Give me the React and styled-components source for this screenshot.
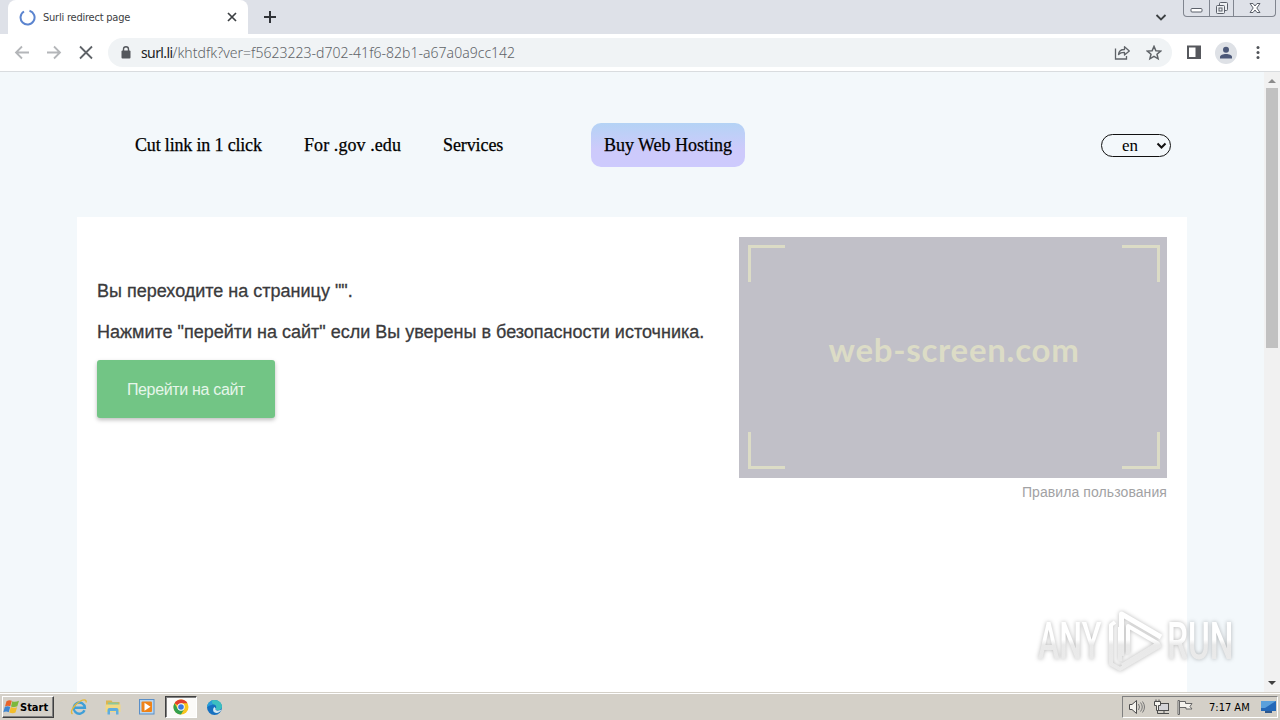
import React from "react";
import styled, { createGlobalStyle } from "styled-components";

const GlobalStyle = createGlobalStyle`
  * {
    box-sizing: border-box;
  }
  body {
    margin: 0;
    overflow: hidden;
  }
  svg {
    display: block;
    flex: none;
  }
`;

const Screen = styled.div`
  display: flex;
  flex-direction: column;
  position: relative;
  width: 1280px;
  height: 720px;
  background: #fff;
  font-family: "Liberation Sans", Arial, sans-serif;
`;

const Label = styled.span`
  white-space: nowrap;
  letter-spacing: ${(p) => p.$spacing || 0}px;
`;

/* ---------- browser window ---------- */

const TabStrip = styled.div`
  display: flex;
  height: 34px;
  padding-left: 8px;
  background: #dee1e8;
`;

const Tab = styled.div`
  display: flex;
  align-items: center;
  width: 240px;
  height: 34px;
  padding: 0 10px 0 11px;
  background: #fff;
  border-radius: 8px 8px 0 0;
  font-family: "DejaVu Sans Condensed", "DejaVu Sans", sans-serif;
  font-stretch: condensed;
  font-size: 11px;
  color: #3c4043;
`;

const TabTitle = styled(Label)`
  flex: 1;
  margin-left: 7px;
`;

const NewTab = styled.div`
  display: flex;
  align-items: center;
  flex: 1;
  padding-left: 15px;
`;

const TabSearch = styled.div`
  display: flex;
  align-items: center;
  width: 28px;
`;

const WindowButtons = styled.div`
  display: flex;
  width: 93px;
  height: 17px;
  margin-right: 4px;
  border: 1px solid #80858f;
  border-top: 0;
  border-radius: 0 0 4px 4px;
`;

const WindowButton = styled.div`
  display: flex;
  align-items: center;
  justify-content: center;
  width: ${(p) => p.$width}px;
  & + & {
    border-left: 1px solid #80858f;
  }
`;

const Toolbar = styled.div`
  display: flex;
  align-items: center;
  height: 38px;
  padding: 0 14px;
  background: #fff;
  border-bottom: 1px solid #d9dcdf;
`;

const NavButtons = styled.div`
  display: flex;
  gap: 16px;
  width: 94px;
`;

const AddressBar = styled.div`
  display: flex;
  align-items: center;
  width: 1064px;
  height: 29px;
  padding: 0 10px 0 12px;
  background: #f0f3f5;
  border-radius: 15px;
  font-family: "Noto Sans", sans-serif;
  font-size: 14px;
  font-weight: 300;
  color: #5f6368;
  b {
    font-weight: 400;
    letter-spacing: -0.6px;
    color: #202124;
  }
`;

const Url = styled(Label)`
  flex: 1;
  margin-left: 9px;
`;

const BarIcons = styled.div`
  display: flex;
  gap: 16px;
`;

const ToolIcons = styled.div`
  display: flex;
  align-items: center;
  margin-left: 14px;
`;

const Avatar = styled.div`
  display: flex;
  align-items: center;
  justify-content: center;
  width: 22px;
  height: 22px;
  margin: 0 13px 0 13px;
  border-radius: 50%;
  background: #dee1e6;
`;

/* ---------- page ---------- */

const Viewport = styled.div`
  display: flex;
  height: 620px;
`;

const Page = styled.div`
  flex: 1;
  padding: 0 77px;
  background: #f3f8fb;
`;

const Header = styled.header`
  display: flex;
  align-items: center;
  height: 145px;
  padding: 2px 0 0 58px;
  font-family: "Liberation Serif", "Times New Roman", serif;
  font-size: 18px;
  color: #000;
`;

const Menu = styled.nav`
  display: flex;
  width: 456px;
  -webkit-text-stroke: 0.25px #000;
`;

const MenuItem = styled.a`
  width: ${(p) => p.$width}px;
`;

const HostingButton = styled.a`
  display: flex;
  align-items: center;
  justify-content: center;
  width: 154px;
  height: 44px;
  margin-top: -1px;
  border-radius: 10px;
  background: linear-gradient(#b4d3f5, #cdcafb 60%, #cdcafd);
  -webkit-text-stroke: 0.25px #000;
`;

const Language = styled.div`
  display: flex;
  align-items: center;
  justify-content: space-between;
  width: 70px;
  height: 23px;
  margin-left: auto;
  margin-right: 16px;
  padding: 0 3px 0 20px;
  border: 1px solid #111;
  border-radius: 12px;
  font-size: 17px;
`;

const Card = styled.main`
  display: flex;
  justify-content: space-between;
  height: 475px;
  padding: 20px;
  background: #fff;
`;

const Message = styled.div`
  padding-top: 44px;
  font-size: 18px;
  color: #3a3a3c;
  -webkit-text-stroke: 0.3px #3a3a3c;
`;

const Line = styled.p`
  height: 21px;
  margin: 0 0 20px;
  line-height: 21px;
`;

const GoButton = styled.div`
  display: flex;
  align-items: center;
  justify-content: center;
  width: 178px;
  height: 58px;
  margin-top: -3px;
  padding-top: 2px;
  border-radius: 3px;
  background: #72c585;
  box-shadow: 0 2px 4px rgba(0, 0, 0, 0.26);
  font-size: 16px;
  color: #e6f6ea;
  -webkit-text-stroke: 0;
`;

const Aside = styled.div`
  display: flex;
  flex-direction: column;
  align-items: flex-end;
  width: 428px;
`;

const Preview = styled.div`
  display: grid;
  grid-template-columns: 37px 38px;
  grid-template-rows: 37px 37px;
  justify-content: space-between;
  align-content: space-between;
  position: relative;
  width: 428px;
  height: 241px;
  padding: 8px 7px 9px 9px;
  background: #c1c0c8;
`;

const Corner = styled.div`
  border: 0 solid #dcdcc6;
  border-width: ${(p) => p.$sides};
`;

const PreviewName = styled.div`
  display: flex;
  align-items: center;
  justify-content: center;
  position: absolute;
  inset: 0;
  padding: 0 0 18px 2px;
  font-family: Lato, sans-serif;
  font-size: 33px;
  font-weight: 700;
  color: #dcdcc6;
`;

const Rules = styled.a`
  margin-top: 6px;
  font-size: 14px;
  line-height: 17px;
  color: #a2a2a4;
`;

const ScrollBar = styled.div`
  display: flex;
  flex-direction: column;
  align-items: center;
  justify-content: space-between;
  width: 16px;
  padding: 6px 0 6px;
  background: #f1f1f1;
`;

const Thumb = styled.div`
  width: 12px;
  height: 260px;
  margin: 5px 0 auto;
  background: #c1c1c1;
`;

const Watermark = styled.div`
  display: flex;
  align-items: center;
  position: absolute;
  left: 1038px;
  top: 608px;
  height: 66px;
  filter: drop-shadow(0 0 2px rgba(0, 0, 0, 0.28));
`;

/* ---------- taskbar ---------- */

const Taskbar = styled.div`
  display: flex;
  align-items: center;
  height: 28px;
  padding: 1px 2px 0 2px;
  background: #d4d0c8;
  border-top: 1px solid #d4d0c8;
  box-shadow: inset 0 1px 0 #fff;
  font-family: "DejaVu Sans Condensed", "DejaVu Sans", sans-serif;
  font-stretch: condensed;
  font-size: 11px;
  color: #000;
`;

const StartButton = styled.div`
  display: flex;
  align-items: center;
  width: 52px;
  height: 22px;
  padding-left: 0;
  border: 1px solid;
  border-color: #fff #404040 #404040 #fff;
  box-shadow: inset -1px -1px 0 #808080;
  font-weight: 700;
`;

const Launchers = styled.div`
  display: flex;
  align-items: center;
  flex: 1;
  margin-left: 9px;
`;

const Launcher = styled.div`
  display: flex;
  align-items: center;
  justify-content: center;
  width: 32px;
  height: 22px;
  margin-right: 2px;
  border: 1px solid transparent;
  &:last-child {
    margin-left: -1px;
  }
  ${(p) =>
    p.$active &&
    `
    background: #fbfaf8;
    border-color: #404040 #fff #fff #404040;
    box-shadow: inset 1px 1px 0 #808080;
  `}
`;

const Tray = styled.div`
  display: flex;
  align-items: center;
  width: 156px;
  height: 22px;
  padding-left: 6px;
  border: 1px solid;
  border-color: #808080 #fff #fff #808080;
`;

const Clock = styled(Label)`
  margin: 0 10px 0 16px;
`;

const Arrow = ({ flip }) => (
  <svg width="16" height="16" viewBox="0 0 16 16" fill="none" stroke="#b4b6b9" strokeWidth="1.8">
    <path d={flip ? "M1 7.500h13M8 1.500l6 6-6 6" : "M15 7.500H2M8 1.500l-6 6 6 6"} />
  </svg>
);

const FlagIcon = () => (
  <svg width="17" height="16" viewBox="0 0 17 16">
    <path d="M3.500 2.300C5.500 1 7 1 8.800 1.800L7.300 7.300C5.500 6.500 4 6.500 2 7.500z" fill="#e8642a" />
    <path d="M9.300 2.200c2 1 3.900.8 6.700-.4L14.300 7.300c-2 .9-4 .9-6.300.1z" fill="#7cb83c" />
    <path d="M1.800 8c2-.9 3.500-.8 5.400 0l-1.500 5.300c-1.800-1-3.300-.9-5.400-.1z" fill="#3f86d0" />
    <path d="M7.800 8.100c2 1 4 1 6.300.1l-1.600 5.300c-2 .9-4 .8-6.200-.1z" fill="#f2bd2b" />
  </svg>
);

const ExplorerIcon = () => (
  <svg width="18" height="18" viewBox="0 0 18 18" fill="none">
    <path d="M14.500 12.200A5.600 5.600 0 1 1 14.900 9.700H5" stroke="#3f9fd8" strokeWidth="2.400" />
    <path d="M2.500 16C-.5 14 4 6.500 10.500 3c3.500-1.800 6.300-1.500 5.500 1.500" stroke="#e3b83c" strokeWidth="1.400" />
  </svg>
);

const FolderIcon = () => (
  <svg width="18" height="18" viewBox="0 0 18 18">
    <path d="M2 2.500h5.500l1 1.500h7V14H2z" fill="#dcb650" />
    <path d="M4 4.500h10.500V9H4z" fill="#8cc79a" />
    <path d="M1.500 6.500h15V14h-15z" fill="#f1d984" />
    <path d="M3.500 16.500V12q0-2 2-2h7q2 0 2 2v4.500H12V13H6v3.500z" fill="#5fadde" />
  </svg>
);

const MediaIcon = () => (
  <svg width="18" height="18" viewBox="0 0 18 18">
    <rect x="1.500" y="1.500" width="14.500" height="14.500" fill="#b8d6f0" stroke="#5a8fc8" />
    <rect x="3.500" y="3.500" width="10.500" height="10.500" rx="1" fill="#ef8318" />
    <path d="M6.500 4.800l6 4-6 4z" fill="#fff" />
  </svg>
);

const ChromeIcon = () => (
  <svg width="16" height="16" viewBox="0 0 16 16">
    <circle cx="8" cy="8" r="7.500" fill="#f9c51d" />
    <path d="M8 8L1.500 4.250A7.500 7.500 0 0 1 14.500 4.250H8z" fill="#e2402f" />
    <path d="M1.500 4.250A7.500 7.500 0 0 0 8 15.500L11.200 9.900 8 8 4.700 9.800z" fill="#34a04e" />
    <circle cx="8" cy="8" r="3.700" fill="#fff" />
    <circle cx="8" cy="8" r="2.800" fill="#3b78e0" />
  </svg>
);

const EdgeIcon = () => (
  <svg width="17" height="17" viewBox="0 0 17 17">
    <circle cx="8.500" cy="8.500" r="7.500" fill="#1670c0" />
    <path d="M1 8.500C1.500 3.500 5 1 8.500 1c4.500 0 7.500 3 7.500 6.500 0 2.500-2 3.800-4 3.800-2.500 0-3-1-2-2 .6-.8.500-4-3.500-4C4 5.300 1.800 6.500 1 8.500z" fill="#3cbfc0" />
    <path d="M1 8.500c.3-3 2.500-6 5.500-7C4.500 3.500 8 4 6 6 4 6 2 7 1 8.500z" fill="#2a9bdc" />
    <path d="M9.700 9.600c-1 1.300 1 2.300 3 2 1.300-.2 2.300-.7 2.800-1-1 2.400-3 3.400-5 3.400-3.500 0-4.500-4-2-6z" fill="#d4e8f2" />
  </svg>
);

const Browser = () => (
  <>
    <TabStrip>
      <Tab>
        <svg width="17" height="17" viewBox="0 0 17 17" fill="none" stroke="#5b84cf" strokeWidth="2">
          <path d="M10.500 1.800A7 7 0 1 1 5 2.500" />
        </svg>
        <TabTitle $spacing={-0.22}>Surli redirect page</TabTitle>
        <svg width="12" height="12" viewBox="0 0 12 12" stroke="#3c4043" strokeWidth="1.700">
          <path d="M2 2l8 8M10 2l-8 8" />
        </svg>
      </Tab>
      <NewTab>
        <svg width="14" height="14" viewBox="0 0 14 14" stroke="#303338" strokeWidth="2">
          <path d="M7 1v12M1 7h12" />
        </svg>
      </NewTab>
      <TabSearch>
        <svg width="12" height="12" viewBox="0 0 12 12" fill="none" stroke="#3c4043" strokeWidth="1.800">
          <path d="M1.500 4L6 8.500 10.500 4" />
        </svg>
      </TabSearch>
      <WindowButtons>
        <WindowButton $width={25}>
          <svg width="13" height="16" viewBox="0 0 13 16">
            <rect x="1" y="8.500" width="11" height="3.500" rx="1" fill="#fff" stroke="#5b606a" />
          </svg>
        </WindowButton>
        <WindowButton $width={25}>
          <svg width="14" height="16" viewBox="0 0 14 16" fill="#eef0f3" stroke="#5b606a">
            <rect x="4.500" y="2.500" width="8" height="8" rx="1" />
            <rect x="1.500" y="5.500" width="8" height="8" rx="1" />
            <rect x="4" y="8" width="3" height="3" />
          </svg>
        </WindowButton>
        <WindowButton $width={42}>
          <svg width="14" height="16" viewBox="0 0 14 16" fill="#fff" stroke="#5b606a">
            <path d="M2 3.500h3l2 2.500 2-2.500h3L8.800 8l3.200 4.500H9L7 10l-2 2.500H2L5.200 8z" />
          </svg>
        </WindowButton>
      </WindowButtons>
    </TabStrip>
    <Toolbar>
      <NavButtons>
        <Arrow />
        <Arrow flip />
        <svg width="16" height="16" viewBox="0 0 16 16" stroke="#5f6368" strokeWidth="1.800">
          <path d="M2 1.500l12 12M14 1.500l-12 12" />
        </svg>
      </NavButtons>
      <AddressBar>
        <svg width="12" height="14" viewBox="0 0 12 14">
          <rect x="1.500" y="4.500" width="9" height="8" rx="1" fill="#54575c" />
          <path d="M3.500 5V3.200a2.500 2.500 0 0 1 5 0V5" fill="none" stroke="#54575c" strokeWidth="1.400" />
        </svg>
        <Url $spacing={0.025}>
          <b>surl.li</b>/khtdfk?ver=f5623223-d702-41f6-82b1-a67a0a9cc142
        </Url>
        <BarIcons>
          <svg width="16" height="16" viewBox="0 0 16 16" fill="none" stroke="#5f6368" strokeWidth="1.300">
            <path d="M1.500 3.500v10.500h11V11" />
            <path d="M4.500 9.500c.3-3.700 2.500-5 6-5V1.700L15.300 6l-4.800 4V7.300C8 7.300 6 7.500 4.500 9.500z" strokeLinejoin="round" />
          </svg>
          <svg width="16" height="16" viewBox="0 0 16 16" fill="none" stroke="#5f6368" strokeWidth="1.500">
            <path d="M8 1.400l1.900 4.300 4.700.4-3.600 3.100 1.100 4.600L8 11.400l-4.100 2.400L5 9.200 1.400 6.100l4.700-.4z" />
          </svg>
        </BarIcons>
      </AddressBar>
      <ToolIcons>
        <svg width="16" height="16" viewBox="0 0 16 16">
          <path d="M1 .5h14v13.500H1zM3 2.500v9.500h6.500V2.500z" fill="#56585d" fillRule="evenodd" />
        </svg>
        <Avatar>
          <svg width="14" height="14" viewBox="0 0 14 14" fill="#4c5878">
            <circle cx="7" cy="3.700" r="3" />
            <path d="M1 12.500V11c0-4 12-4 12 0v1.500z" />
          </svg>
        </Avatar>
        <svg width="16" height="16" viewBox="0 0 16 16" fill="#505358">
          <circle cx="8" cy="2.500" r="1.500" />
          <circle cx="8" cy="7.500" r="1.500" />
          <circle cx="8" cy="12.500" r="1.500" />
        </svg>
      </ToolIcons>
    </Toolbar>
  </>
);

const Site = () => (
  <Viewport>
    <Page>
      <Header>
        <Menu>
          <MenuItem $width={169}>
            <Label $spacing={-0.17}>Cut link in 1 click</Label>
          </MenuItem>
          <MenuItem $width={139}>
            <Label $spacing={0.08}>For .gov .edu</Label>
          </MenuItem>
          <MenuItem $width={60}>
            <Label $spacing={-0.1}>Services</Label>
          </MenuItem>
        </Menu>
        <HostingButton>
          <Label>Buy Web Hosting</Label>
        </HostingButton>
        <Language>
          <Label>en</Label>
          <svg width="11" height="10" viewBox="0 0 11 10" fill="none" stroke="#111" strokeWidth="2">
            <path d="M1.500 2.500l4 4 4-4" />
          </svg>
        </Language>
      </Header>
      <Card>
        <Message>
          <Line>
            <Label>Вы переходите на страницу "".</Label>
          </Line>
          <Line>
            <Label>Нажмите "перейти на сайт" если Вы уверены в безопасности источника.</Label>
          </Line>
          <GoButton>
            <Label $spacing={-0.33}>Перейти на сайт</Label>
          </GoButton>
        </Message>
        <Aside>
          <Preview>
            <Corner $sides="3px 0 0 3px" />
            <Corner $sides="3px 3px 0 0" />
            <Corner $sides="0 0 3px 3px" />
            <Corner $sides="0 3px 3px 0" />
            <PreviewName>
              <Label $spacing={0.72}>web-screen.com</Label>
            </PreviewName>
          </Preview>
          <Rules>
            <Label $spacing={0.08}>Правила пользования</Label>
          </Rules>
        </Aside>
      </Card>
    </Page>
    <ScrollBar>
      <svg width="8" height="5" viewBox="0 0 8 5">
        <path d="M0 5l4-4 4 4z" fill="#8b8b8b" />
      </svg>
      <Thumb />
      <svg width="8" height="5" viewBox="0 0 8 5">
        <path d="M0 0h8L4 4z" fill="#404040" />
      </svg>
    </ScrollBar>
  </Viewport>
);

// the letters are drawn from their baseline, so their gradient starts 51 higher
const Fade = ({ id, top }) => (
  <linearGradient id={id} x1="0" y1={top} x2="0" y2={top + 66} gradientUnits="userSpaceOnUse">
    <stop offset="0.480" stopColor="#fff" />
    <stop offset="0.560" stopColor="#e9e9e9" />
    <stop offset="1" stopColor="#ebebeb" />
  </linearGradient>
);

const AnyRun = () => (
  <Watermark>
    <svg width="210" height="66" viewBox="0 0 210 66">
      <defs>
        <Fade id="fade" top={0} />
        <Fade id="fadeText" top={-51} />
      </defs>
      <g fill="url(#fadeText)" fontFamily="Roboto, sans-serif" fontSize="51" fontWeight="500">
        <text transform="translate(0 51) scale(.63 1)">ANY</text>
        <text transform="translate(129 51) scale(.655 1)">RUN</text>
      </g>
      <g fill="none" stroke="url(#fade)" strokeLinejoin="round">
        <path d="M83.500 48V6L123 29" strokeWidth="5" />
        <path d="M82 53V19M90 46V18l30 17.500L84 57.500" strokeWidth="4" />
        <path d="M77 14l-4 3v39l9 5 41-24" strokeWidth="4" />
      </g>
    </svg>
  </Watermark>
);

const Desktop = () => (
  <Taskbar>
    <StartButton>
      <FlagIcon />
      <Label>Start</Label>
    </StartButton>
    <Launchers>
      <Launcher>
        <ExplorerIcon />
      </Launcher>
      <Launcher>
        <FolderIcon />
      </Launcher>
      <Launcher>
        <MediaIcon />
      </Launcher>
      <Launcher $active>
        <ChromeIcon />
      </Launcher>
      <Launcher>
        <EdgeIcon />
      </Launcher>
    </Launchers>
    <Tray>
      <svg width="64" height="18" viewBox="0 0 64 18" fill="#f5f3ee" stroke="#4c4c4c">
        <path d="M.5 6.500H3L7.500 2.500v13L3 11.500H.5z" />
        <path d="M9.500 6q2 3 0 6M11.500 4.500q3.500 4.500 0 9M13.500 3.500q4 5.500 0 11" fill="none" stroke="#777" />
        <rect x="29.500" y="5.500" width="10" height="7" fill="#d4d4d8" />
        <path d="M32 15.500h8M35 12.500v3" />
        <path d="M25.500 3.500h6v4h-2v5h-2v-5h-2zM27 1.500v2M30 1.500v2" />
        <path d="M28.500 12.500v3h4" fill="none" />
        <path d="M50.500 2.500v14h-1.500v-14zM50.500 3.500h6v2h6.500l-2 3 2 2.500h-6V9.500h-6.500z" stroke="#666" />
      </svg>
      <Clock>7:17 AM</Clock>
      <svg width="17" height="16" viewBox="0 0 17 16">
        <rect x="1" y="2" width="15" height="10" fill="#2468b8" />
        <path d="M1 2h15L5 9H1z" fill="#5aa0dc" />
        <path d="M5 12h7v2H5z" fill="#30588c" />
      </svg>
    </Tray>
  </Taskbar>
);

const App = () => (
  <Screen>
    <GlobalStyle />
    <Browser />
    <Site />
    <Desktop />
    <AnyRun />
  </Screen>
);

export default App;
